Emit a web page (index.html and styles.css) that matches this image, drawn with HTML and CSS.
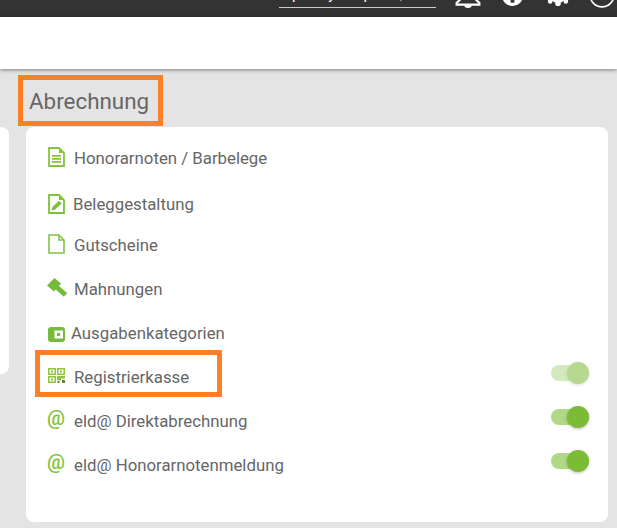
FILE: index.html
```html
<!DOCTYPE html>
<html lang="de">
<head>
<meta charset="utf-8">
<title>Abrechnung</title>
<link rel="stylesheet" href="styles.css">
</head>
<body>
<header class="topbar">
  <a class="user">pyp,</a>
  <svg class="top-icon bell" viewBox="0 0 24 24"><path d="M12 1a7 7 0 0 0-7 7v7l-3.500 3.500V20h21v-1.500L19 15V8a7 7 0 0 0-7-7z" fill="none" stroke="#fff" stroke-width="2"/><path d="M8.500 20a3.500 3 0 0 0 7 0v-.5h-7z" fill="#fff"/></svg>
  <svg class="top-icon info" viewBox="0 0 24 24"><circle cx="12" cy="12" r="11" fill="#fff"/><rect x="10" y="10" width="4" height="9.500" fill="#333"/></svg>
  <svg class="top-icon gear" viewBox="0 0 24 24"><circle cx="12" cy="12" r="9" fill="#fff"/><path d="M1 13h5v6a2.500 2.500 0 0 1-5 0zM18 13h5v6a2.500 2.500 0 0 1-5 0zM9 16h6v5.500a3 2.500 0 0 1-6 0z" fill="#fff"/></svg>
  <svg class="top-icon power" viewBox="0 0 24 24"><circle cx="12" cy="12" r="11" fill="none" stroke="#fff" stroke-width="1.500"/></svg>
</header>
<div class="subbar"></div>
<main class="content">
  <div class="side-card"></div>
  <section class="panel">
    <h1 class="title">Abrechnung</h1>
    <div class="card">
      <div class="row row-1">
        <svg class="icon" viewBox="0 0 17 20"><path d="M1 1h10l5 5v13H1z" fill="none" stroke="#84c441" stroke-width="1.800"/><path d="M11 1v5h5z" fill="#84c441"/><path d="M4 8h9v1.700H4zM4 11h9v1.700H4zM4 14h9v1.700H4z" fill="#84c441"/></svg>
        <span>Honorarnoten / Barbelege</span>
      </div>
      <div class="row row-2">
        <svg class="icon" viewBox="0 0 17 20"><path d="M1 1h10l5 5v13H1z" fill="none" stroke="#7fc13a" stroke-width="1.800"/><path d="M11 1v5h5z" fill="#7fc13a"/><path d="M3.500 16.500l.8-3.500 6.700-6.200 2.700 2.800-6.700 6.200z" fill="#7fc13a"/></svg>
        <span>Beleggestaltung</span>
      </div>
      <div class="row row-3">
        <svg class="icon" viewBox="0 0 17 20"><path d="M1 1h10l5 5v13H1z" fill="none" stroke="#84c441" stroke-width="1.600"/><path d="M11 1v5h5" fill="none" stroke="#84c441" stroke-width="1.600"/></svg>
        <span>Gutscheine</span>
      </div>
      <div class="row row-4">
        <svg class="icon hammer" viewBox="0 0 20 19"><path d="M7.500 0l6.500 5.500L7 13.500 0 7.500z" fill="#76bc3a"/><path d="M9 8.500l9.500 8.500" stroke="#76bc3a" stroke-width="5" fill="none"/></svg>
        <span>Mahnungen</span>
      </div>
      <div class="row row-5">
        <svg class="icon wallet" viewBox="0 0 17 15"><path d="M3 0h11a3 3 0 0 1 3 3v9a3 3 0 0 1-3 3H3a3 3 0 0 1-3-3V3a3 3 0 0 1 3-3z" fill="#76bc3a"/><path d="M6.500 3.500h8.500v8H6.500z" fill="#fff"/><rect x="9" y="6" width="3" height="3" fill="#76bc3a"/></svg>
        <span>Ausgabenkategorien</span>
      </div>
      <div class="row row-6">
        <svg class="icon qr" viewBox="0 0 17 15"><g fill="none" stroke="#8cc63f" stroke-width="1.500"><rect x=".75" y=".75" width="6.500" height="5.500"/><rect x="9.750" y=".75" width="6.500" height="5.500"/><rect x=".75" y="8.750" width="6.500" height="5.500"/></g><path d="M3 2.500h2v2H3zM12 2.500h2v2h-2zM3 10.500h2v2H3z" fill="#8cc63f"/><path d="M9 8h8v2.500h-4v2H9z" fill="#8cc63f"/><path d="M9.500 13h2v2h-2zM14 12h3v3h-3z" fill="#6c7a55"/></svg>
        <span>Registrierkasse</span>
        <i class="switch off"></i>
      </div>
      <div class="row row-7">
        <span class="at">@</span>
        <span>eld@ Direktabrechnung</span>
        <i class="switch"></i>
      </div>
      <div class="row row-8">
        <span class="at">@</span>
        <span>eld@ Honorarnotenmeldung</span>
        <i class="switch"></i>
      </div>
      <div class="mark mark-row"></div>
    </div>
    <div class="mark mark-title"></div>
  </section>
</main>
</body>
</html>
```
FILE: styles.css
```css
* { box-sizing: border-box; }
html, body { margin: 0; height: 100%; }
body {
  width: 617px;
  height: 528px;
  overflow: hidden;
  background: #e4e4e4;
  font-family: Roboto, "Liberation Sans", sans-serif;
  color: #666;
}
.topbar {
  height: 17px;
  background: #333;
  display: flex;
  align-items: flex-end;
  overflow: hidden;
  padding: 0 0 0 279px;
}
.user {
  width: 157px;
  height: 24px;
  flex: none;
  margin-bottom: 9px;
  padding-left: 13px;
  border-bottom: 1px solid #ccc;
  color: #fff;
  font-size: 15px;
  line-height: 20px;
  letter-spacing: 28px;
  white-space: nowrap;
  overflow: hidden;
}
.top-icon { flex: none; display: block; }
.bell { width: 26px; height: 26px; margin: 0 0 8px 19px; }
.info { width: 23px; height: 23px; margin: 0 0 10px 20px; }
.gear { width: 22px; height: 22px; margin: 0 0 11px 23px; }
.power { width: 26px; height: 26px; margin: 0 0 9px 20px; }
.subbar {
  height: 52px;
  background: #fff;
  box-shadow: 0 1px 4px rgba(0, 0, 0, .45);
  position: relative;
}
.content {
  display: flex;
  align-items: flex-start;
  height: 459px;
}
.side-card {
  width: 9px;
  height: 247px;
  margin: 58px 0 0;
  background: #fff;
  border-radius: 0 8px 8px 0;
  flex: none;
}
.panel {
  width: 582px;
  margin-left: 17px;
  position: relative;
  flex: none;
}
.title {
  margin: 0;
  height: 58px;
  padding: 19px 0 0 3px;
  font-size: 22.400px;
  line-height: 26px;
  font-weight: 400;
}
.card {
  height: 395px;
  background: #fff;
  border-radius: 8px;
  position: relative;
  font-size: 16.800px;
}
.row {
  position: absolute;
  left: 21px;
  right: 19px;
  height: 22px;
  display: flex;
  align-items: center;
  line-height: 22px;
  white-space: nowrap;
}
.row-1 { top: 20px; }
.row-2 { top: 66px; }
.row-3 { top: 107px; }
.row-4 { top: 151px; }
.row-5 { top: 195px; }
.row-6 { top: 239px; }
.row-7 { top: 283px; }
.row-8 { top: 327px; }
.icon { width: 17px; height: 20px; margin: -2px 9px 0 1px; flex: none; }
.row-2 .icon { margin: 0 8px 0 1px; }
.hammer { width: 20px; height: 19px; margin: -3px 7px 0 0; }
.wallet { width: 17px; height: 15px; margin: 3px 6px 0 1px; }
.qr { width: 17px; height: 15px; margin: -3px 9px 0 1px; }
.at {
  width: 18px;
  margin: -6px 9px 0 0;
  color: #7fc13a;
  font-size: 20px;
  font-weight: 500;
}
.switch {
  margin-left: auto;
  width: 38px;
  height: 16px;
  border-radius: 8px;
  background: #b0d987;
  position: relative;
  flex: none;
  top: -4px;
}
.switch::after {
  content: "";
  position: absolute;
  right: 0;
  top: -3px;
  width: 22px;
  height: 22px;
  border-radius: 50%;
  background: #7cbb34;
  box-shadow: 0 1px 3px rgba(0, 0, 0, .25);
}
.switch.off { opacity: .55; }
.mark {
  position: absolute;
  border: 5px solid #ff7f27;
  pointer-events: none;
}
.mark-title { left: -8px; top: 6px; width: 145px; height: 51px; }
.mark-row { left: 9px; top: 223px; width: 187px; height: 47px; }
```
